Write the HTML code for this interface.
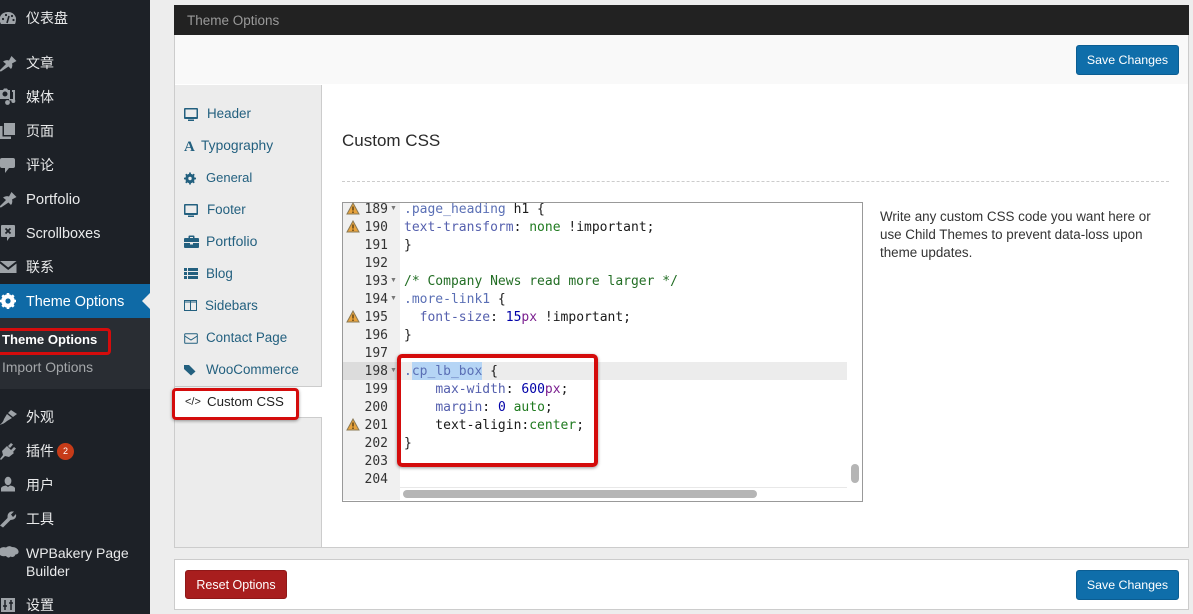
<!DOCTYPE html>
<html>
<head>
<meta charset="utf-8">
<style>
html,body{margin:0;padding:0;}
body{width:1193px;height:614px;overflow:hidden;position:relative;background:#ededed;font-family:"Liberation Sans","Noto Sans CJK SC",sans-serif;}
.a{position:absolute;white-space:nowrap;}
.m{position:absolute;left:26px;font-size:14px;line-height:18px;color:#e9eaeb;white-space:nowrap;}
.i{position:absolute;left:0;}
.t{position:absolute;font-size:13.4px;line-height:18px;color:#23607f;white-space:nowrap;}
.ti{position:absolute;}
.btn{position:absolute;width:101px;height:28px;background:#0f6eaa;border:1px solid #0b5d92;border-radius:3px;color:#fff;font-size:12.400px;line-height:28px;text-align:center;}
.c{position:absolute;left:404px;font:13px/18px "DejaVu Sans Mono",monospace;color:#1a1a1a;white-space:pre;}
.n{position:absolute;left:343px;width:45px;text-align:right;font:13px/18px "DejaVu Sans Mono",monospace;color:#333;}
.p{color:#5560ae}.g{color:#1f7a1f}.b{color:#0000a8}.v{color:#7a1f8f}.s{color:#5a6fb5}
.f{position:absolute;left:390px;width:7px;font-size:7px;line-height:18px;color:#777;}
</style>
</head>
<body>
<!-- sidebar -->
<div class="a" style="left:0;top:0;width:150px;height:614px;background:#1d2127"></div>
<div class="a" style="left:0;top:284px;width:150px;height:34px;background:#0f6aa6"></div>
<div class="a" style="left:0;top:318px;width:150px;height:71px;background:#292d33"></div>
<svg class="a" style="left:142px;top:293px" width="8" height="16"><path d="M8 0L0 8L8 16Z" fill="#ededed"/></svg>

<svg class="i" style="top:10px" width="18" height="16" viewBox="0 0 18 16"><path d="M1 14Q-1 11 0 7Q2 2 8 2Q14 2 16 8Q16 12 15 14Z" fill="#9ea3a8"/><path d="M7 13L9 6" stroke="#1d2127" stroke-width="1.600"/><circle cx="3" cy="9" r="1.100" fill="#1d2127"/><circle cx="6" cy="5" r="1.100" fill="#1d2127"/><circle cx="12" cy="6" r="1.100" fill="#1d2127"/><circle cx="13.500" cy="10" r="1.100" fill="#1d2127"/></svg>
<div class="m" style="top:9px">仪表盘</div>
<svg class="i" style="top:54px" width="18" height="18" viewBox="0 0 18 18"><path d="M-1 17L6 10L3 7.500Q6 5.500 9 6.500L11.500 2L16.500 7L12 9.500Q13 12.500 11 15L8.500 12.500L1 17.500Z" fill="#9ea3a8"/></svg>
<div class="m" style="top:54px">文章</div>
<svg class="i" style="top:88px" width="18" height="18" viewBox="0 0 18 18"><path d="M0 2H3L4 0.500H7L8 2H10V11H0Z M5 3.500A2.500 2.500 0 1 0 5 8.500A2.500 2.500 0 1 0 5 3.500Z" fill="#9ea3a8" fill-rule="evenodd"/><path d="M9 12.500H15V2H12V4H13V11H9Z" fill="#9ea3a8"/><circle cx="7.500" cy="14.500" r="2.400" fill="#9ea3a8"/><circle cx="13.300" cy="13" r="2" fill="#9ea3a8"/></svg>
<div class="m" style="top:88px">媒体</div>
<svg class="i" style="top:122px" width="18" height="18" viewBox="0 0 18 18"><path d="M4 1H15V13H4Z" fill="#9ea3a8"/><path d="M0 4H2.500V14.500H11V17H0Z" fill="#9ea3a8"/></svg>
<div class="m" style="top:122px">页面</div>
<svg class="i" style="top:156px" width="18" height="18" viewBox="0 0 18 18"><path d="M2 2H13Q15 2 15 4V10Q15 12 13 12H9L5 17V12H2Q0 12 0 10V4Q0 2 2 2Z" fill="#9ea3a8"/></svg>
<div class="m" style="top:156px">评论</div>
<svg class="i" style="top:190px" width="18" height="18" viewBox="0 0 18 18"><path d="M-1 17L6 10L3 7.500Q6 5.500 9 6.500L11.500 2L16.500 7L12 9.500Q13 12.500 11 15L8.500 12.500L1 17.500Z" fill="#9ea3a8"/></svg>
<div class="m" style="top:191px;font-size:14.800px">Portfolio</div>
<svg class="i" style="top:224px" width="18" height="18" viewBox="0 0 18 18"><path d="M2 1H14Q15 1 15 2V12Q15 13 14 13H10L7 17V13H2Q1 13 1 12V2Q1 1 2 1Z" fill="#9ea3a8"/><path d="M5.500 4.500L10.500 9.500M10.500 4.500L5.500 9.500" stroke="#1d2127" stroke-width="1.800"/></svg>
<div class="m" style="top:225px;font-size:14.400px">Scrollboxes</div>
<svg class="i" style="top:258px" width="18" height="18" viewBox="0 0 18 18"><path d="M0 3H16.500L8.200 9.500Z M0 5.500L8.200 12L16.500 5.500V15H0Z" fill="#9ea3a8"/></svg>
<div class="m" style="top:258px">联系</div>
<svg class="i" style="top:292px" width="18" height="18" viewBox="0 0 18 18"><circle cx="8" cy="9" r="5" fill="none" stroke="#fff" stroke-width="3.600"/><path d="M8 1V17M0 9H16M2.300 3.300L13.700 14.700M13.700 3.300L2.300 14.700" stroke="#fff" stroke-width="2.600"/><circle cx="8" cy="9" r="2.600" fill="#0f6aa6"/></svg>
<div class="m" style="top:293px;color:#fff;font-size:14.400px">Theme Options</div>

<div class="a" style="left:-6px;top:328px;width:111px;height:21px;border:3px solid #d40c0c;border-radius:4px"></div>
<div class="a" style="left:2px;top:331px;font-size:13.100px;line-height:18px;font-weight:bold;color:#fff">Theme Options</div>
<div class="a" style="left:2px;top:358px;font-size:13.900px;line-height:18px;color:#a4a7aa">Import Options</div>

<svg class="i" style="top:408px" width="18" height="18" viewBox="0 0 18 18"><path d="M-1 17Q3 15 4 11L7 6L12 10L7 13Q4 16 -1 17Z M8 5L11 2L17 6L13 9Z" fill="#9ea3a8"/></svg>
<div class="m" style="top:408px">外观</div>
<svg class="i" style="top:442px" width="18" height="18" viewBox="0 0 18 18"><path d="M0 17L3 13L2 9L7 4L14 11L9 15L5 14L1 18Z M8 4L11 1L13 2.500L10 6Z M11 8L14 5L16 6.500L13 10Z" fill="#9ea3a8"/></svg>
<div class="m" style="top:442px">插件</div>
<div class="a" style="left:57px;top:443px;width:17px;height:17px;border-radius:50%;background:#c63b18;color:#fff;font-size:9px;line-height:17px;text-align:center">2</div>
<svg class="i" style="top:476px" width="18" height="18" viewBox="0 0 18 18"><ellipse cx="8" cy="5" rx="3.400" ry="4.200" fill="#9ea3a8"/><path d="M1 15.500V12Q2 10 6 9.500L8 11L10 9.500Q14 10 15 12V15.500Z" fill="#9ea3a8"/></svg>
<div class="m" style="top:476px">用户</div>
<svg class="i" style="top:510px" width="18" height="18" viewBox="0 0 18 18"><path d="M0 15.500L7.500 8Q7 3 11 1.500L14 1.500L11 4.500L13 7L16 4Q17 9.500 10.500 10L3 17.500Z" fill="#9ea3a8"/></svg>
<div class="m" style="top:510px">工具</div>
<svg class="i" style="top:544px" width="20" height="18" viewBox="0 0 20 18"><path d="M-1 6Q1 2 6 3.500Q9 1 12 3Q17 3 18.500 7Q19 10 15.500 10.500Q14 14 10.500 12.500Q8 15 6 12Q0 13 -1 9Z" fill="#9ea3a8"/></svg>
<div class="m" style="top:544px;line-height:18px">WPBakery Page<br>Builder</div>
<svg class="i" style="top:596px" width="18" height="18" viewBox="0 0 18 18"><path d="M1 2H15V16H1Z" fill="#9ea3a8"/><path d="M5 4V14M11 4V14M3 10H7M9 7H13" stroke="#1d2127" stroke-width="1.500"/></svg>
<div class="m" style="top:596px">设置</div>

<!-- top panel -->
<div class="a" style="left:174px;top:5px;width:1015px;height:30px;background:#222;color:#9a9a9a;font-size:13.500px;line-height:31px;text-indent:13px">Theme Options</div>
<div class="a" style="left:174px;top:35px;height:49px;background:#f9f9f9;border:1px solid #ccc;border-top:0;box-sizing:content-box;width:1013px"></div>
<div class="btn" style="left:1076px;top:45px">Save Changes</div>

<!-- main panel -->
<div class="a" style="left:174px;top:84px;width:1013px;height:463px;background:#fff;border:1px solid #ccc;border-top:0"></div>
<div class="a" style="left:175px;top:85px;width:146px;height:301px;background:#ececec;border-right:1px solid #ccc;border-bottom:1px solid #ccc"></div>
<div class="a" style="left:175px;top:417px;width:147px;height:130px;background:#ececec;border-right:1px solid #ccc;border-top:1px solid #ccc;box-sizing:border-box"></div>

<svg class="ti" style="left:184px;top:107px" width="16" height="15" viewBox="0 0 16 15"><path d="M1 1H13Q14 1 14 2V11Q14 12 13 12H1Q0 12 0 11V2Q0 1 1 1Z M1.500 2.500V10H12.500V2.500Z M4 12.500H10V14H4Z" fill="#23607f" fill-rule="evenodd"/></svg>
<div class="t" style="left:207px;top:105px">Header</div>
<div class="a" style="left:184px;top:138px;font:bold 15px/18px 'Liberation Serif',serif;color:#23607f">A</div>
<div class="t" style="left:201px;top:137px;font-size:13.800px">Typography</div>
<svg class="ti" style="left:184px;top:172px" width="12" height="13" viewBox="0 0 12 12"><circle cx="6" cy="6" r="3.400" fill="none" stroke="#23607f" stroke-width="2.600"/><path d="M6 0V12M0 6H12M1.800 1.800L10.200 10.200M10.200 1.800L1.800 10.200" stroke="#23607f" stroke-width="1.800"/><circle cx="6" cy="6" r="1.700" fill="#ececec"/></svg>
<div class="t" style="left:206px;top:169px;font-size:13px">General</div>
<svg class="ti" style="left:184px;top:203px" width="16" height="15" viewBox="0 0 16 15"><path d="M1 1H13Q14 1 14 2V11Q14 12 13 12H1Q0 12 0 11V2Q0 1 1 1Z M1.500 2.500V10H12.500V2.500Z M4 12.500H10V14H4Z" fill="#23607f" fill-rule="evenodd"/></svg>
<div class="t" style="left:207px;top:201px">Footer</div>
<svg class="ti" style="left:184px;top:235px" width="15" height="14" viewBox="0 0 15 14"><path d="M0 4Q0 3 1 3H4.500V1.500Q4.500 .5 5.500 .5H9.500Q10.500 .5 10.500 1.500V3H14Q15 3 15 4V7H0Z M6 2V3H9V2Z M0 8H6V9.500H9V8H15V12Q15 13 14 13H1Q0 13 0 12Z" fill="#23607f" fill-rule="evenodd"/></svg>
<div class="t" style="left:206px;top:232px;font-size:14px">Portfolio</div>
<svg class="ti" style="left:184px;top:267px" width="14" height="13" viewBox="0 0 14 13"><path d="M0 1H3V4H0Z M4 1H14V4H4Z M0 5H3V8H0Z M4 5H14V8H4Z M0 9H3V12H0Z M4 9H14V12H4Z" fill="#23607f"/></svg>
<div class="t" style="left:206px;top:265px">Blog</div>
<svg class="ti" style="left:184px;top:299px" width="13" height="13" viewBox="0 0 13 13"><path d="M.5 1.500H12.500V11.500H.5Z M.5 3H12.500 M6.500 1.500V11.500" fill="none" stroke="#23607f" stroke-width="1"/></svg>
<div class="t" style="left:205px;top:297px">Sidebars</div>
<svg class="ti" style="left:184px;top:331px" width="14" height="14" viewBox="0 0 14 14"><path d="M1.500 2.700H12.500Q13.300 2.700 13.300 3.500V11.500Q13.300 12.300 12.500 12.300H1.500Q.7 12.300 .7 11.500V3.500Q.7 2.700 1.500 2.700Z M.7 5L7 9L13.300 5" fill="none" stroke="#23607f" stroke-width="1"/></svg>
<div class="t" style="left:206px;top:329px">Contact Page</div>
<svg class="ti" style="left:184px;top:364px" width="12" height="12" viewBox="0 0 12 12"><path d="M0 1H5L11.500 7.500L7 11.500L0 5Z" fill="#23607f"/></svg>
<div class="t" style="left:206px;top:361px">WooCommerce</div>
<div class="a" style="left:185px;top:393px;font:11px/18px 'Liberation Sans',sans-serif;color:#222">&lt;/&gt;</div>
<div class="t" style="left:207px;top:393px;color:#222;font-size:13.300px">Custom CSS</div>
<div class="a" style="left:172px;top:388px;width:121px;height:26px;border:3px solid #d40c0c;border-radius:4px;box-shadow:0 1px 3px rgba(0,0,0,.4)"></div>

<div class="a" style="left:342px;top:130px;font-size:17px;line-height:21px;color:#2a2a2a">Custom CSS</div>
<div class="a" style="left:342px;top:181px;width:827px;border-top:1px dashed #ccc"></div>

<!-- editor -->
<div class="a" style="left:342px;top:202px;width:519px;height:298px;background:#fff;border:1px solid #999;overflow:hidden"></div>
<div class="a" style="left:343px;top:203px;width:57px;height:297px;background:#f0f0f0"></div>
<div class="a" style="left:343px;top:362px;width:57px;height:18px;background:#dcdcdc"></div>
<div class="a" style="left:400px;top:362px;width:447px;height:18px;background:#ececec"></div>
<div class="a" style="left:412px;top:362px;width:70px;height:18px;background:#b5d5f5"></div>
<div class="a" style="left:400px;top:487px;width:447px;height:1px;background:#e8e8e8"></div>
<div class="a" style="left:403px;top:490px;width:354px;height:8px;border-radius:4px;background:#b5b5b5"></div>
<div class="a" style="left:851px;top:464px;width:8px;height:19px;border-radius:4px;background:#b5b5b5"></div>

<div class="n" style="top:201px">189</div><div class="f" style="top:200px">▼</div>
<div class="n" style="top:219px">190</div>
<div class="n" style="top:237px">191</div>
<div class="n" style="top:255px">192</div>
<div class="n" style="top:273px">193</div><div class="f" style="top:272px">▼</div>
<div class="n" style="top:291px">194</div><div class="f" style="top:290px">▼</div>
<div class="n" style="top:309px">195</div>
<div class="n" style="top:327px">196</div>
<div class="n" style="top:345px">197</div>
<div class="n" style="top:363px">198</div><div class="f" style="top:362px">▼</div>
<div class="n" style="top:381px">199</div>
<div class="n" style="top:399px">200</div>
<div class="n" style="top:417px">201</div>
<div class="n" style="top:435px">202</div>
<div class="n" style="top:453px">203</div>
<div class="n" style="top:471px">204</div>

<svg class="a" style="left:346px;top:202px" width="14" height="13" viewBox="0 0 14 13"><path d="M7 1L13 12H1Z" fill="#e8a33d" stroke="#8a7a55" stroke-width="1"/><path d="M7 4.500V8.500M7 9.500V11" stroke="#4a3510" stroke-width="1.300"/></svg>
<svg class="a" style="left:346px;top:220px" width="14" height="13" viewBox="0 0 14 13"><path d="M7 1L13 12H1Z" fill="#e8a33d" stroke="#8a7a55" stroke-width="1"/><path d="M7 4.500V8.500M7 9.500V11" stroke="#4a3510" stroke-width="1.300"/></svg>
<svg class="a" style="left:346px;top:310px" width="14" height="13" viewBox="0 0 14 13"><path d="M7 1L13 12H1Z" fill="#e8a33d" stroke="#8a7a55" stroke-width="1"/><path d="M7 4.500V8.500M7 9.500V11" stroke="#4a3510" stroke-width="1.300"/></svg>
<svg class="a" style="left:346px;top:418px" width="14" height="13" viewBox="0 0 14 13"><path d="M7 1L13 12H1Z" fill="#e8a33d" stroke="#8a7a55" stroke-width="1"/><path d="M7 4.500V8.500M7 9.500V11" stroke="#4a3510" stroke-width="1.300"/></svg>

<div class="c" style="top:201px"><span class="s">.page_heading</span> h1 {</div>
<div class="c" style="top:219px"><span class="p">text-transform</span>: <span class="g">none</span> !important;</div>
<div class="c" style="top:237px">}</div>
<div class="c" style="top:273px;color:#236e25">/* Company News read more larger */</div>
<div class="c" style="top:291px"><span class="s">.more-link1</span> {</div>
<div class="c" style="top:309px">  <span class="p">font-size</span>: <span class="b">15</span><span class="v">px</span> !important;</div>
<div class="c" style="top:327px">}</div>
<div class="c" style="top:363px"><span class="s">.cp_lb_box</span> {</div>
<div class="c" style="top:381px">    <span class="p">max-width</span>: <span class="b">600</span><span class="v">px</span>;</div>
<div class="c" style="top:399px">    <span class="p">margin</span>: <span class="b">0</span> <span class="g">auto</span>;</div>
<div class="c" style="top:417px">    text-aligin:<span class="g">center</span>;</div>
<div class="c" style="top:435px">}</div>
<div class="a" style="left:397px;top:354px;width:193px;height:105px;border:4px solid #d40c0c;border-radius:5px;box-shadow:0 1px 3px rgba(0,0,0,.4)"></div>

<div class="a" style="left:880px;top:208px;font-size:13.400px;line-height:18px;color:#333">Write any custom CSS code you want here or<br>use Child Themes to prevent data-loss upon<br>theme updates.</div>

<!-- footer panel -->
<div class="a" style="left:174px;top:559px;width:1013px;height:49px;background:#fff;border:1px solid #ccc"></div>
<div class="a" style="left:185px;top:570px;width:100px;height:27px;background:#a81e1e;border:1px solid #8f1818;border-radius:3px;color:#fff;font-size:12.500px;line-height:28px;text-align:center">Reset Options</div>
<div class="btn" style="left:1076px;top:570px">Save Changes</div>
</body>
</html>
